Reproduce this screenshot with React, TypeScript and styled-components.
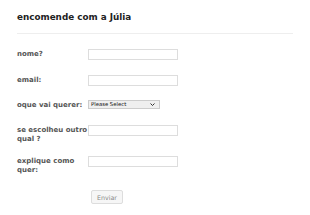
import React from 'react';
import styled, { createGlobalStyle } from 'styled-components';

const GlobalStyle = createGlobalStyle`
  html, body {
    margin: 0;
    padding: 0;
    background: #fff;
  }
  body {
    font-family: "DejaVu Sans", Verdana, sans-serif;
  }
`;

const Page = styled.div`
  width: 310px;
  height: 215px;
  box-sizing: border-box;
  padding: 12px 17px 0 17px;
  overflow: hidden;
`;

const Title = styled.h2`
  margin: 0;
  font-size: 8.8px;
  line-height: 11px;
  font-weight: 700;
  color: #222;
  padding-bottom: 10px;
  border-bottom: 1px solid #eee;
`;

const Form = styled.form`
  display: flex;
  flex-direction: column;
  padding-top: 15px;
`;

const Row = styled.div<{ $tight?: boolean }>`
  display: flex;
  align-items: flex-start;
  min-height: ${({ $tight }) => ($tight ? 25 : 26)}px;
  box-sizing: border-box;
  padding-bottom: ${({ $tight }) => ($tight ? 11 : 12)}px;
`;

const Label = styled.label`
  width: 71px;
  flex-shrink: 0;
  font-size: 7px;
  line-height: 9px;
  font-weight: 700;
  color: #555;
  padding-top: 1px;
`;

const Input = styled.input`
  display: block;
  width: 90px;
  height: 11px;
  box-sizing: border-box;
  border: 1px solid #ddd;
  padding: 0 2px;
  margin: 0;
  font-size: 6px;
  outline: none;
`;

const SelectWrap = styled.div`
  position: relative;
  width: 72px;
  height: 9px;
  margin-top: 0;
`;

const Select = styled.select`
  display: block;
  appearance: none;
  -webkit-appearance: none;
  width: 100%;
  height: 9px;
  box-sizing: border-box;
  border: 1px solid #ccc;
  border-radius: 0;
  background: #efefef;
  font-family: "DejaVu Sans", Verdana, sans-serif;
  font-size: 5.3px;
  line-height: 7px;
  padding: 0 2px;
  margin: 0;
  color: #111;
  outline: none;
`;

const Chevron = styled.svg`
  position: absolute;
  right: 5px;
  top: 3px;
  width: 5px;
  height: 3px;
  pointer-events: none;
`;

const Actions = styled.div`
  padding-left: 74px;
  padding-top: 3px;
`;

const Button = styled.button`
  display: block;
  width: 32px;
  height: 14px;
  box-sizing: border-box;
  border: 1px solid #ddd;
  background: #f6f6f6;
  color: #888;
  font-family: "DejaVu Sans", Verdana, sans-serif;
  font-size: 6.3px;
  padding: 0;
  border-radius: 2px;
`;

export default function App() {
  return (
    <>
      <GlobalStyle />
      <Page>
        <Title>encomende com a Júlia</Title>
        <Form onSubmit={e => e.preventDefault()}>
          <Row>
            <Label>nome?</Label>
            <Input type="text" />
          </Row>
          <Row $tight>
            <Label>email:</Label>
            <Input type="email" />
          </Row>
          <Row $tight>
            <Label>oque vai querer:</Label>
            <SelectWrap>
              <Select defaultValue="">
                <option value="">Please Select</option>
              </Select>
              <Chevron viewBox="0 0 5 3">
                <path d="M0.5 0.5 L2.5 2.5 L4.5 0.5" fill="none" stroke="#333" strokeWidth="1" />
              </Chevron>
            </SelectWrap>
          </Row>
          <Row>
            <Label>se escolheu outro qual ?</Label>
            <Input type="text" />
          </Row>
          <Row>
            <Label>explique como quer:</Label>
            <Input type="text" />
          </Row>
          <Actions>
            <Button type="submit">Enviar</Button>
          </Actions>
        </Form>
      </Page>
    </>
  );
}
